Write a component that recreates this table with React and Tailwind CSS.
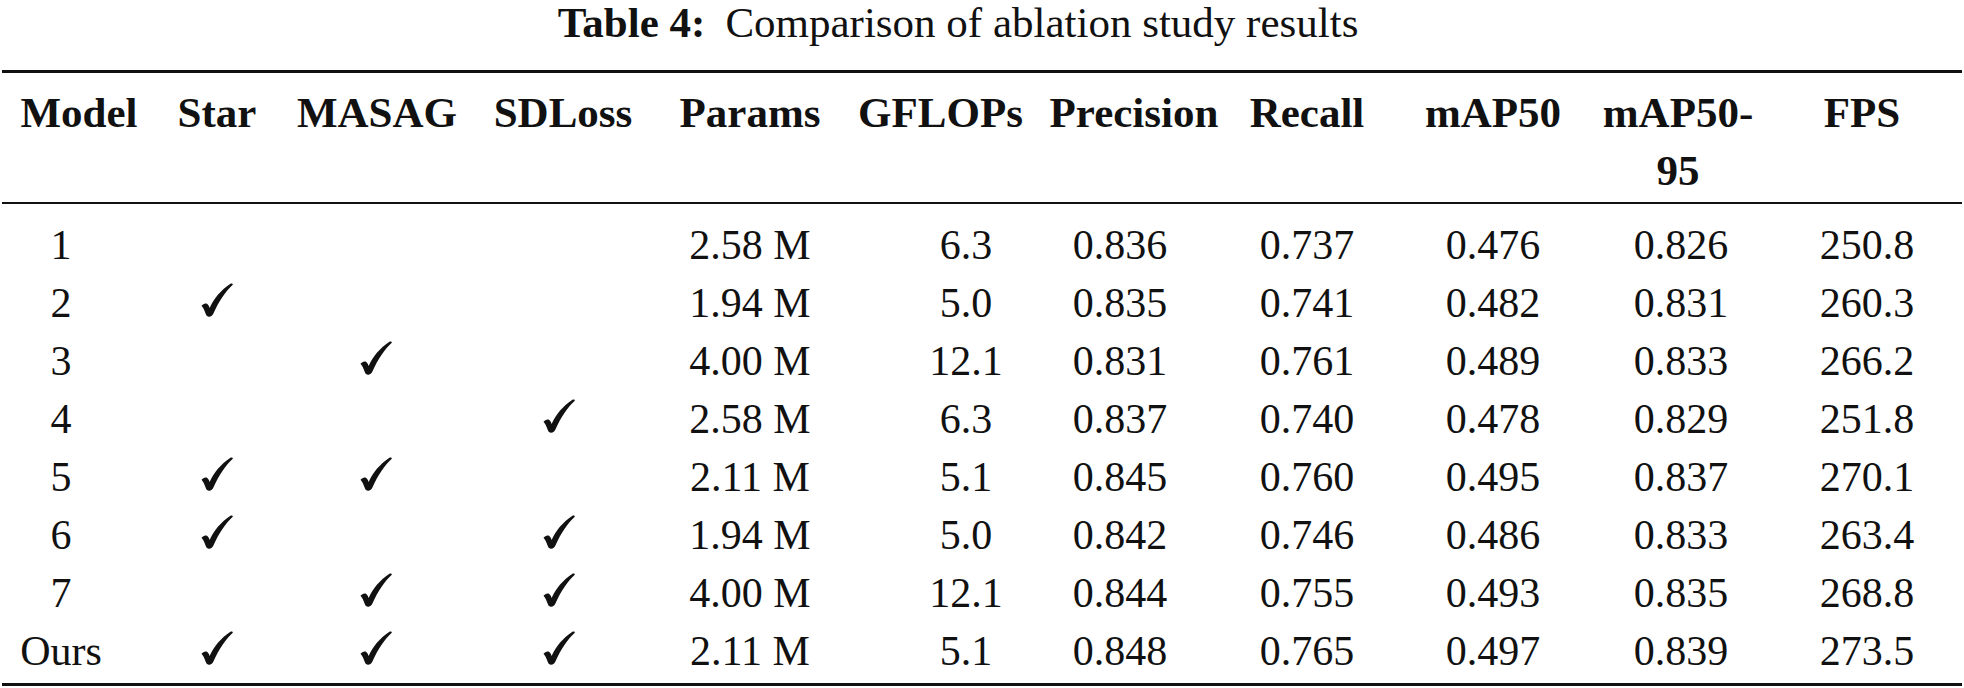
import React from 'react';

// Ablation table: column widths follow the header centres of the reference.
const columns = [
  { label: ['Model'], head: 'pl-[10px]', body: 'pr-[26px]' },
  { label: ['Star'], head: 'pr-[11px]', body: 'pr-[11px]' },
  { label: ['MASAG'], head: 'pr-[13px]', body: 'pr-[15px]' },
  { label: ['SDLoss'], head: '', body: 'pr-[8px]' },
  { label: ['Params'], head: '', body: '' },
  { label: ['GFLOPs'], head: '', body: 'pl-[51px]' },
  { label: ['Precision'], head: 'pl-[11px]', body: 'pr-[17px]' },
  { label: ['Recall'], head: 'pr-[6px]', body: 'pr-[6px]' },
  { label: ['mAP50'], head: '', body: '' },
  { label: ['mAP50-', '95'], head: '', body: 'pl-[6px]' },
  { label: ['FPS'], head: 'pr-[10px]', body: '' },
];

const rows = [
  ['1', false, false, false, '2.58 M', '6.3', '0.836', '0.737', '0.476', '0.826', '250.8'],
  ['2', true, false, false, '1.94 M', '5.0', '0.835', '0.741', '0.482', '0.831', '260.3'],
  ['3', false, true, false, '4.00 M', '12.1', '0.831', '0.761', '0.489', '0.833', '266.2'],
  ['4', false, false, true, '2.58 M', '6.3', '0.837', '0.740', '0.478', '0.829', '251.8'],
  ['5', true, true, false, '2.11 M', '5.1', '0.845', '0.760', '0.495', '0.837', '270.1'],
  ['6', true, false, true, '1.94 M', '5.0', '0.842', '0.746', '0.486', '0.833', '263.4'],
  ['7', false, true, true, '4.00 M', '12.1', '0.844', '0.755', '0.493', '0.835', '268.8'],
  ['Ours', true, true, true, '2.11 M', '5.1', '0.848', '0.765', '0.497', '0.839', '273.5'],
];

const gridCols =
  'grid grid-cols-[148px_149px_173px_186px_188px_193px_183px_180px_186px_184px_194px]';

const Check = () => (
  <svg width="32" height="34" viewBox="0 0 32 34" className="mt-[9px]" aria-label="✓">
    <path
      fill="#111"
      d="M0.5 22.8 C1.8 21 4 20 5.6 20.6 C7 21.2 8 23 8.6 25 C13 15.5 20 7 29.4 0.8 C30.6 0.2 32 0.8 31.8 1.8 C25 8 18 18 12.4 30.6 C11.6 32.6 10 34 7.6 33.8 C6 33.6 5.2 32.4 4.6 30.6 C3.6 27.6 2.4 25 0.5 22.8 Z"
    />
  </svg>
);

const Rule = ({ className = '' }) => <div className={`mx-[2px] bg-[#111] ${className}`} />;

export default function App() {
  return (
    <div className="w-[1964px] h-[688px] bg-white text-[#111] [font-family:'Liberation_Serif',serif] overflow-hidden">
      {/* Caption */}
      <p className="text-center text-[43px] leading-[46px] pr-[48px]">
        <span className="font-bold">Table 4:</span>
        <span className="ml-[20px]">Comparison of ablation study results</span>
      </p>

      <Rule className="mt-[24px] h-[3px]" />

      {/* Header */}
      <div className={`${gridCols} pt-[11px] pb-[2px] text-[43px] leading-[58px] font-bold`}>
        {columns.map((col, i) => (
          <div key={i} className={`flex flex-col items-center whitespace-nowrap ${col.head}`}>
            {col.label.map((line) => (
              <span key={line}>{line}</span>
            ))}
          </div>
        ))}
      </div>

      <Rule className="h-[2px]" />

      {/* Body */}
      <div className="pt-[12px] pb-[3px] text-[42px] leading-[58px]">
        {rows.map((row, r) => (
          <div key={r} className={`${gridCols} h-[58px]`}>
            {row.map((cell, c) => (
              <div key={c} className={`flex justify-center whitespace-nowrap ${columns[c].body}`}>
                {typeof cell === 'boolean' ? cell ? <Check /> : null : <span>{cell}</span>}
              </div>
            ))}
          </div>
        ))}
      </div>

      <Rule className="h-[3px]" />
    </div>
  );
}
